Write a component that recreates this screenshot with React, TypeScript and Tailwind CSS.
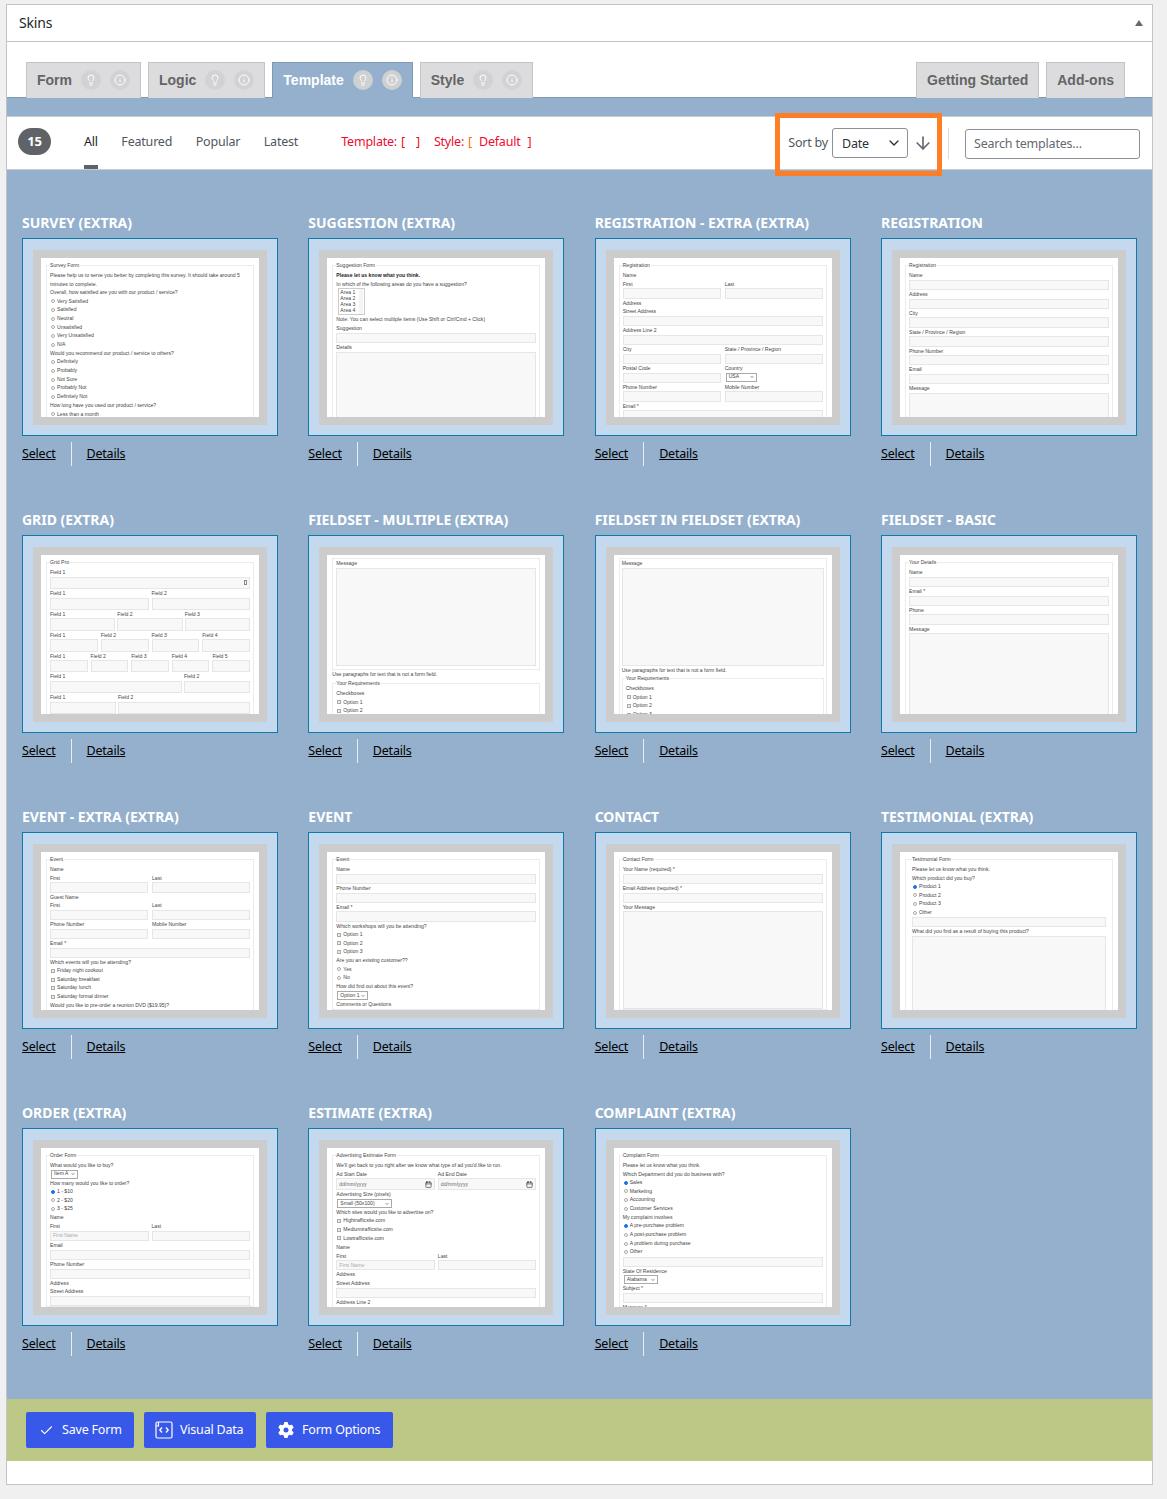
import type { ReactNode } from "react";
import { Calendar, Check, ChevronDown, ArrowDown, Info, Lightbulb } from "lucide-react";
import { FaGear } from "react-icons/fa6";

const T = ({ children, bold = false }: { children: ReactNode; bold?: boolean }) => (
  <div className={`h-[8.7px] leading-[8.7px] whitespace-nowrap ${bold ? "font-bold text-[#222]" : ""}`}>{children}</div>
);

const Box = ({ h = "h-[10.2px]", children }: { h?: string; children?: ReactNode }) => (
  <div className={`${h} border border-[#e6e6e6] bg-[#f8f8f8] flex items-center justify-between px-[2px] text-[#aaa] leading-none overflow-hidden`}>
    {children}
  </div>
);

const Area = ({ h }: { h: string }) => <div className={`${h} border border-[#e6e6e6] bg-[#f8f8f8]`} />;

const Field = ({ label, h }: { label: string; h?: string }) => (
  <div>
    <T>{label}</T>
    <Box h={h} />
  </div>
);

const Cols = ({ labels, cols = "grid-cols-2", gap = "gap-x-[4px]", h }: { labels: string[]; cols?: string; gap?: string; h?: string }) => (
  <div className={`grid ${cols} ${gap}`}>
    {labels.map((label, i) => (
      <Field key={i} label={label} h={h} />
    ))}
  </div>
);

const Radio = ({ children, on = false }: { children: ReactNode; on?: boolean }) => (
  <div className="h-[8.7px] flex items-center gap-[2px] whitespace-nowrap pl-[1px]">
    <span className={`w-[4px] h-[4px] rounded-full border-[0.5px] ${on ? "border-[#1a73e8] bg-[#1a73e8]" : "border-[#aaa] bg-white"}`} />
    {children}
  </div>
);

const Tick = ({ children }: { children: ReactNode }) => (
  <div className="h-[8.7px] flex items-center gap-[2px] whitespace-nowrap pl-[1px]">
    <span className="w-[4px] h-[4px] border-[0.5px] border-[#aaa] bg-[#ececec]" />
    {children}
  </div>
);

const Drop = ({ children, w }: { children: ReactNode; w: string }) => (
  <div className={`${w} h-[9px] ml-[1px] border-[0.5px] border-[#aaa] bg-white flex items-center justify-between px-[2px] whitespace-nowrap`}>
    {children}
    <ChevronDown size={4} strokeWidth={4} />
  </div>
);

function Sheet({ legend, pad = "px-[3px]", children }: { legend?: string; pad?: string; children: ReactNode }) {
  return (
    <fieldset className={`mx-[5px] min-w-0 border border-[#ececec] ${pad} ${legend ? "pt-[2px]" : ""}`}>
      {legend && <legend className="pr-[1px] h-[8px] leading-[8px]">{legend}</legend>}
      {children}
    </fieldset>
  );
}

const Requirements = ({ extra = false }: { extra?: boolean }) => (
  <fieldset className={`border border-[#ececec] px-[3px] pt-[2px] ${extra ? "" : "mt-px"}`}>
    <legend className="h-[8px] leading-[8px]">Your Requirements</legend>
    <T>Checkboxes</T>
    <Tick>Option 1</Tick>
    <Tick>Option 2</Tick>
    {extra && <Tick>Option 3</Tick>}
  </fieldset>
);

const forms: { title: string; sheet: ReactNode }[] = [
  {
    title: "SURVEY (EXTRA)",
    sheet: (
      <Sheet legend="Survey Form">
        <T>Please help us to serve you better by completing this survey. It should take around 5</T>
        <T>minutes to complete.</T>
        <T>Overall, how satisfied are you with our product / service?</T>
        <Radio>Very Satisfied</Radio>
        <Radio>Satisfied</Radio>
        <Radio>Neutral</Radio>
        <Radio>Unsatisfied</Radio>
        <Radio>Very Unsatisfied</Radio>
        <Radio>N/A</Radio>
        <T>Would you recommend our product / service to others?</T>
        <Radio>Definitely</Radio>
        <Radio>Probably</Radio>
        <Radio>Not Sure</Radio>
        <Radio>Probably Not</Radio>
        <Radio>Definitely Not</Radio>
        <T>How long have you used our product / service?</T>
        <Radio>Less than a month</Radio>
      </Sheet>
    ),
  },
  {
    title: "SUGGESTION (EXTRA)",
    sheet: (
      <Sheet legend="Suggestion Form">
        <T bold>Please let us know what you think.</T>
        <T>In which of the following areas do you have a suggestion?</T>
        <div className="w-[27px] h-[27px] ml-[2px] border border-[#ccc] px-[1px] leading-[6px] flex justify-between">
          <div>
            <div>Area 1</div>
            <div>Area 2</div>
            <div>Area 3</div>
            <div>Area 4</div>
          </div>
          <div className="w-[4px] bg-[#f4f4f4]" />
        </div>
        <T>Note: You can select multiple items (Use Shift or Ctrl/Cmd + Click)</T>
        <Field label="Suggestion" />
        <T>Details</T>
        <Area h="h-[80px]" />
      </Sheet>
    ),
  },
  {
    title: "REGISTRATION - EXTRA (EXTRA)",
    sheet: (
      <Sheet legend="Registration">
        <T>Name</T>
        <Cols labels={["First", "Last"]} />
        <T>Address</T>
        <Field label="Street Address" />
        <Field label="Address Line 2" />
        <Cols labels={["City", "State / Province / Region"]} />
        <div className="grid grid-cols-2 gap-x-[4px]">
          <Field label="Postal Code" />
          <div>
            <T>Country</T>
            <Drop w="w-[31px]">USA</Drop>
          </div>
        </div>
        <Cols labels={["Phone Number", "Mobile Number"]} />
        <Field label="Email *" />
      </Sheet>
    ),
  },
  {
    title: "REGISTRATION",
    sheet: (
      <Sheet legend="Registration">
        <Field label="Name" />
        <Field label="Address" />
        <Field label="City" />
        <Field label="State / Province / Region" />
        <Field label="Phone Number" />
        <Field label="Email" />
        <T>Message</T>
        <Area h="h-[40px]" />
      </Sheet>
    ),
  },
  {
    title: "GRID (EXTRA)",
    sheet: (
      <Sheet legend="Grid Pro">
        <T>Field 1</T>
        <Box h="h-[12.2px]">
          <span />
          <span className="w-[3px] h-[5px] border-[0.5px] border-[#888]" />
        </Box>
        <Cols h="h-[12.2px]" gap="gap-x-[3px]" labels={["Field 1", "Field 2"]} />
        <Cols h="h-[12.2px]" gap="gap-x-[2px]" cols="grid-cols-3" labels={["Field 1", "Field 2", "Field 3"]} />
        <Cols h="h-[12.2px]" gap="gap-x-[3px]" cols="grid-cols-4" labels={["Field 1", "Field 2", "Field 3", "Field 4"]} />
        <Cols h="h-[12.2px]" gap="gap-x-[3px]" cols="grid-cols-5" labels={["Field 1", "Field 2", "Field 3", "Field 4", "Field 5"]} />
        <Cols h="h-[12.2px]" gap="gap-x-[2px]" cols="grid-cols-[2fr_1fr]" labels={["Field 1", "Field 2"]} />
        <Cols h="h-[12.2px]" gap="gap-x-[2px]" cols="grid-cols-[1fr_2fr]" labels={["Field 1", "Field 2"]} />
      </Sheet>
    ),
  },
  {
    title: "FIELDSET - MULTIPLE (EXTRA)",
    sheet: (
      <div className="mx-[5px]">
        <fieldset className="border border-[#ececec] px-[3px] pb-[3px]">
          <T>Message</T>
          <Area h="h-[98px]" />
        </fieldset>
        <T>Use paragraphs for text that is not a form field.</T>
        <Requirements />
      </div>
    ),
  },
  {
    title: "FIELDSET IN FIELDSET (EXTRA)",
    sheet: (
      <Sheet pad="px-[2px]">
        <T>Message</T>
        <Area h="h-[98px]" />
        <T>Use paragraphs for text that is not a form field.</T>
        <Requirements extra />
      </Sheet>
    ),
  },
  {
    title: "FIELDSET - BASIC",
    sheet: (
      <Sheet legend="Your Details">
        <Field label="Name" />
        <Field label="Email *" />
        <Field label="Phone" />
        <T>Message</T>
        <Area h="h-[90px]" />
      </Sheet>
    ),
  },
  {
    title: "EVENT - EXTRA (EXTRA)",
    sheet: (
      <Sheet legend="Event">
        <T>Name</T>
        <Cols labels={["First", "Last"]} />
        <T>Guest Name</T>
        <Cols labels={["First", "Last"]} />
        <Cols labels={["Phone Number", "Mobile Number"]} />
        <Field label="Email *" />
        <T>Which events will you be attending?</T>
        <Tick>Friday night cookout</Tick>
        <Tick>Saturday breakfast</Tick>
        <Tick>Saturday lunch</Tick>
        <Tick>Saturday formal dinner</Tick>
        <T>Would you like to pre-order a reunion DVD ($19.95)?</T>
      </Sheet>
    ),
  },
  {
    title: "EVENT",
    sheet: (
      <Sheet legend="Event">
        <Field label="Name" />
        <Field label="Phone Number" />
        <Field label="Email *" />
        <T>Which workshops will you be attending?</T>
        <Tick>Option 1</Tick>
        <Tick>Option 2</Tick>
        <Tick>Option 3</Tick>
        <T>Are you an existing customer??</T>
        <Radio>Yes</Radio>
        <Radio>No</Radio>
        <T>How did find out about this event?</T>
        <Drop w="w-[31px]">Option 1</Drop>
        <T>Comments or Questions</T>
      </Sheet>
    ),
  },
  {
    title: "CONTACT",
    sheet: (
      <Sheet legend="Contact Form">
        <Field label="Your Name (required) *" />
        <Field label="Email Address (required) *" />
        <T>Your Message</T>
        <Area h="h-[98px]" />
      </Sheet>
    ),
  },
  {
    title: "TESTIMONIAL (EXTRA)",
    sheet: (
      <Sheet legend="Testimonial Form" pad="px-[6px]">
        <T>Please let us know what you think.</T>
        <T>Which product did you buy?</T>
        <Radio on>Product 1</Radio>
        <Radio>Product 2</Radio>
        <Radio>Product 3</Radio>
        <Radio>Other</Radio>
        <Box />
        <T>What did you find as a result of buying this product?</T>
        <Area h="h-[80px]" />
      </Sheet>
    ),
  },
  {
    title: "ORDER (EXTRA)",
    sheet: (
      <Sheet legend="Order Form">
        <T>What would you like to buy?</T>
        <Drop w="w-[27px]">Item A</Drop>
        <T>How many would you like to order?</T>
        <Radio on>1 - $10</Radio>
        <Radio>2 - $20</Radio>
        <Radio>3 - $25</Radio>
        <T>Name</T>
        <div className="grid grid-cols-2 gap-x-[3px]">
          <div>
            <T>First</T>
            <Box>First Name</Box>
          </div>
          <Field label="Last" />
        </div>
        <Field label="Email" />
        <Field label="Phone Number" />
        <T>Address</T>
        <Field label="Street Address" />
      </Sheet>
    ),
  },
  {
    title: "ESTIMATE (EXTRA)",
    sheet: (
      <Sheet legend="Advertising Estimate Form">
        <T>We'll get back to you right after we know what type of ad you'd like to run.</T>
        <div className="grid grid-cols-2 gap-x-[3px]">
          <div>
            <T>Ad Start Date</T>
            <Box h="h-[12px]">
              <span className="text-[#666]">dd/mm/yyyy</span>
              <Calendar size={7} className="text-[#222]" />
            </Box>
          </div>
          <div>
            <T>Ad End Date</T>
            <Box h="h-[12px]">
              <span className="text-[#666]">dd/mm/yyyy</span>
              <Calendar size={7} className="text-[#222]" />
            </Box>
          </div>
        </div>
        <T>Advertising Size (pixels)</T>
        <Drop w="w-[55px]">Small (50x100)</Drop>
        <T>Which sites would you like to advertise on?</T>
        <Tick>Hightrafficsite.com</Tick>
        <Tick>Mediumtrafficsite.com</Tick>
        <Tick>Lowtrafficsite.com</Tick>
        <T>Name</T>
        <div className="grid grid-cols-2 gap-x-[3px]">
          <div>
            <T>First</T>
            <Box>First Name</Box>
          </div>
          <Field label="Last" />
        </div>
        <T>Address</T>
        <Field label="Street Address" />
        <Field label="Address Line 2" />
      </Sheet>
    ),
  },
  {
    title: "COMPLAINT (EXTRA)",
    sheet: (
      <Sheet legend="Complaint Form">
        <T>Please let us know what you think.</T>
        <T>Which Department did you do business with?</T>
        <Radio on>Sales</Radio>
        <Radio>Marketing</Radio>
        <Radio>Accounting</Radio>
        <Radio>Customer Services</Radio>
        <T>My complaint involves</T>
        <Radio on>A pre-purchase problem</Radio>
        <Radio>A post-purchase problem</Radio>
        <Radio>A problem during purchase</Radio>
        <Radio>Other</Radio>
        <Box />
        <T>State Of Residence</T>
        <Drop w="w-[34px]">Alabama</Drop>
        <Field label="Subject *" />
        <T>Message *</T>
      </Sheet>
    ),
  },
];

function Tab({ label, active = false, hints = true }: { label: string; active?: boolean; hints?: boolean }) {
  const circle = `w-5 h-5 rounded-full flex items-center justify-center text-white ${active ? "bg-[#cfd0d2]" : "bg-[#d2d2d4]"}`;
  return (
    <div
      className={`h-[36px] -mb-px flex items-center px-[10px] pb-[1px] text-sm font-bold font-['Liberation_Sans',sans-serif] border border-b-0 ${
        active ? "bg-[#94b0cd] border-[#7f9ab3] text-white" : "bg-[#dcdcde] border-[#c3c4c7] text-[#646464]"
      }`}
    >
      {label}
      {hints && (
        <div className="flex gap-[9px] ml-[9px]">
          <span className={circle}>
            <Lightbulb size={12} />
          </span>
          <span className={circle}>
            <Info size={12} />
          </span>
        </div>
      )}
    </div>
  );
}

function TemplateCard({ title, sheet, tall }: { title: string; sheet: ReactNode; tall: boolean }) {
  return (
    <div>
      <h3 className="h-6 mb-[3px] text-sm leading-6 tracking-[-0.04px] font-bold text-white whitespace-nowrap">{title}</h3>
      <div className={`${tall ? "h-[198px]" : "h-[197px]"} flex border border-[#0f79aa] bg-[#c4d9ee] pt-[11px] pb-[10px] px-[10px]`}>
        <div className="flex-1 min-w-0 border-8 border-[#cccccc] bg-white overflow-hidden pt-[3px] text-[5.1px] text-[#444] font-['Liberation_Sans',sans-serif]">
          {sheet}
        </div>
      </div>
      <div className="flex items-center h-6 mt-[6px] text-[12.5px] tracking-[-0.2px] text-black">
        <span className="underline">Select</span>
        <span className="w-px h-6 bg-[#e9eef3] mx-[15px]" />
        <span className="underline">Details</span>
      </div>
    </div>
  );
}

function SaveBar() {
  const button = "h-9 flex items-center rounded-[2px] bg-[#3858e9] text-white text-[12.5px] tracking-[-0.2px]";
  return (
    <div className="h-[62px] bg-[#bdc886] flex items-center gap-[10px] px-[19px]">
      <button className={`${button} w-[108px] pl-[13px] gap-[8px]`}>
        <Check size={15} strokeWidth={1.75} />
        <span className="pt-[1px]">Save Form</span>
      </button>
      <button className={`${button} w-[112px] pl-[11px] gap-[7px]`}>
        <svg width="18" height="18" viewBox="0 0 18 18" fill="none" stroke="currentColor">
          <path d="M1 5V2.5A1.5 1.5 0 0 1 2.5 1H15.5A1.5 1.5 0 0 1 17 2.5V15.5A1.5 1.5 0 0 1 15.5 17H2.5A1.5 1.5 0 0 1 1 15.5V5H3.5V1" strokeWidth="1.2" />
          <path d="M7 6.5 4.8 9 7 11.5M11 6.5 13.2 9 11 11.5" strokeWidth="1.3" />
        </svg>
        <span className="pt-[1px]">Visual Data</span>
      </button>
      <button className={`${button} w-[127px] pl-[12px] gap-[8px]`}>
        <FaGear size={16} />
        <span className="pt-[1px]">Form Options</span>
      </button>
    </div>
  );
}

export default function App() {
  return (
    <div className="min-h-[1499px] bg-[#f0f0f1] pt-[4px] pl-[6px] pr-[14px] font-['Noto_Sans',sans-serif]">
      <div className="border border-[#c3c4c7] bg-white h-[1481px]">
        <div className="h-[37px] flex items-center justify-between pl-3 pr-[9px] border-b border-[#c3c4c7]">
          <h2 className="text-sm tracking-[-0.2px] text-[#1d2327]">Skins</h2>
          <span className="w-0 h-0 mb-[1px] border-x-[4px] border-x-transparent border-b-[6px] border-b-[#646970]" />
        </div>

        <div className="h-[55px] pt-[20px] flex gap-[7px] px-[19px]">
          <Tab label="Form" />
          <Tab label="Logic" />
          <Tab label="Template" active />
          <Tab label="Style" />
          <div className="ml-auto flex gap-[7px] pr-[8px]">
            <Tab label="Getting Started" hints={false} />
            <Tab label="Add-ons" hints={false} />
          </div>
        </div>

        <div className="bg-[#94b0cd] border-t border-[#7f9ab3]">
          <div className="h-[18px]" />
          <div className="h-[54px] bg-white border-y border-[#c6ccd2] flex items-center pl-[11px] text-[12.5px] tracking-[-0.2px] text-[#50575e]">
            <span className="w-[33px] h-[27px] mb-[3px] rounded-full bg-[#5f6368] text-white text-[13px] font-bold flex items-center justify-center mr-[33px]">15</span>
            <div className="flex items-center gap-[23.5px] h-full pb-[2px]">
              <span className="relative h-full flex items-center text-[#1d2327]">
                All
                <span className="absolute left-0 -bottom-[2px] w-[14px] h-[4px] bg-[#5f6368]" />
              </span>
              <span>Featured</span>
              <span>Popular</span>
              <span>Latest</span>
            </div>
            <div className="ml-[43px] pb-[2px] flex text-[#ee0b2f] whitespace-nowrap">
              <span>Template:</span>
              <span className="ml-[4px]">[</span>
              <span className="ml-[11px]">]</span>
              <span className="ml-[14px]">Style:</span>
              <span className="ml-[4px] text-[#ff6a00]">[</span>
              <span className="ml-[7px]">Default</span>
              <span className="ml-[7px]">]</span>
            </div>

            <div className="relative ml-auto flex items-center h-[30px] mr-[15px]">
              <span className="absolute -left-[13px] -right-[9px] -top-[15px] -bottom-[18px] border-[5px] border-[#fd7e24]" />
              <span className="mr-[4px] pt-[1px] whitespace-nowrap">Sort by</span>
              <div className="w-[76px] h-[30px] border border-[#8c8f94] rounded-[3px] flex items-center justify-between pl-[9px] pr-[5px] text-[#2c3338]">
                <span className="pt-[2px]">Date</span>
                <ChevronDown size={16} />
              </div>
              <ArrowDown size={20} strokeWidth={2} className="ml-[5px] text-[#646970]" />
            </div>
            <span className="w-px h-[31px] bg-[#dcdcde]" />
            <div className="ml-[16px] mr-[12px] mt-[1px] w-[175px] h-[30px] border border-[#8c8f94] rounded-[3px] flex items-center pl-2 pt-[2px] text-[#646970]">
              Search templates...
            </div>
          </div>

          <div className="grid grid-cols-4 gap-x-[30.33px] gap-y-[42px] px-[15px] pt-[41px] pb-[43px]">
            {forms.map((form, i) => (
              <TemplateCard key={form.title} title={form.title} sheet={form.sheet} tall={i < 8 || i > 11} />
            ))}
          </div>
        </div>

        <SaveBar />
      </div>
    </div>
  );
}
